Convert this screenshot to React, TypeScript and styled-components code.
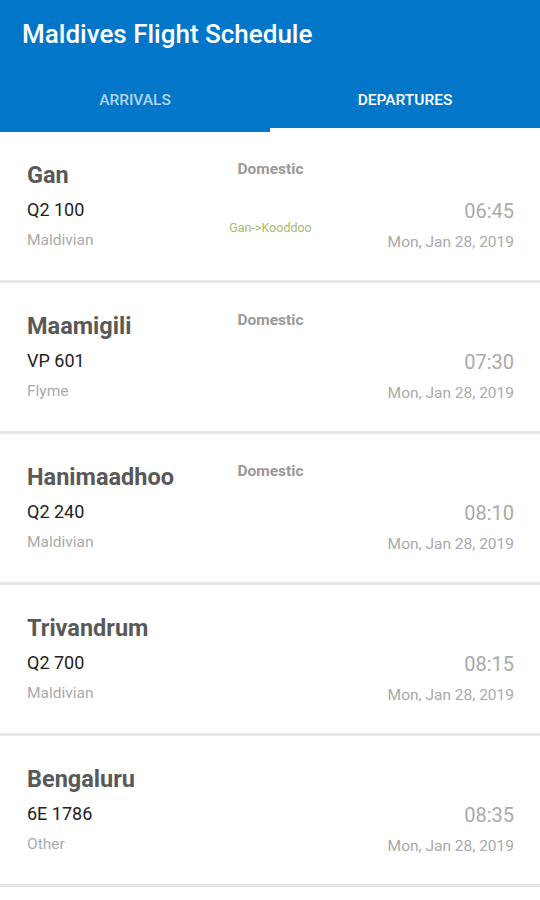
import styled, { createGlobalStyle } from 'styled-components';

const GlobalStyle = createGlobalStyle`
  body {
    margin: 0;
    background: #fff;
    font-family: Roboto, "Noto Sans", sans-serif;
  }
`;

const Page = styled.div`
  display: flex;
  flex-direction: column;
  width: 540px;
`;

const AppBar = styled.div`
  background: #0277c9;
  display: flex;
  flex-direction: column;
`;

const Title = styled.div`
  height: 67px;
  display: flex;
  align-items: center;
  padding-left: 22px;
  color: #fff;
  font-size: 26px;
  font-weight: 500;
`;

const Tabs = styled.div`
  display: grid;
  grid-template-columns: 1fr 1fr;
  height: 65px;
`;

const Tab = styled.div<{ $active?: boolean }>`
  display: flex;
  align-items: center;
  justify-content: center;
  font-size: 15.5px;
  font-weight: 500;
  color: ${(p) => (p.$active ? '#fff' : 'rgba(255,255,255,0.7)')};
  border-bottom: 4px solid ${(p) => (p.$active ? '#fff' : 'transparent')};
  padding-top: 4px;
`;

const Card = styled.div`
  display: grid;
  grid-template-columns: 1fr 1fr 1fr;
  height: 151px;
  box-sizing: border-box;
  padding: 29px 26px 0 27px;
  border-bottom: 3px solid #e6e6e6;
`;

const Col = styled.div<{ $align: 'flex-start' | 'center' | 'flex-end' }>`
  display: flex;
  flex-direction: column;
  align-items: ${(p) => p.$align};
`;

const City = styled.div`
  font-size: 23.5px;
  line-height: 28px;
  font-weight: 700;
  color: #595959;
`;

const FlightNo = styled.div`
  margin-top: 10px;
  font-size: 18px;
  line-height: 22px;
  color: #222;
`;

const Airline = styled.div`
  margin-top: 10px;
  font-size: 15.5px;
  line-height: 18px;
  color: #aaa;
`;

const Kind = styled.div`
  font-size: 15.5px;
  line-height: 18px;
  font-weight: 700;
  color: #999;
  margin-top: -1px;
`;

const Route = styled.div`
  margin-top: 43px;
  font-size: 12.5px;
  line-height: 14px;
  color: #a9ba6c;
`;

const Time = styled.div`
  margin-top: 38px;
  font-size: 20px;
  line-height: 24px;
  color: #aaa;
`;

const DateText = styled.div`
  margin-top: 10px;
  font-size: 15.5px;
  line-height: 18px;
  color: #aaa;
`;

type Flight = {
  city: string;
  no: string;
  airline: string;
  domestic?: boolean;
  route?: string;
  time: string;
};

const flights: Flight[] = [
  { city: 'Gan', no: 'Q2 100', airline: 'Maldivian', domestic: true, route: 'Gan->Kooddoo', time: '06:45' },
  { city: 'Maamigili', no: 'VP 601', airline: 'Flyme', domestic: true, time: '07:30' },
  { city: 'Hanimaadhoo', no: 'Q2 240', airline: 'Maldivian', domestic: true, time: '08:10' },
  { city: 'Trivandrum', no: 'Q2 700', airline: 'Maldivian', time: '08:15' },
  { city: 'Bengaluru', no: '6E 1786', airline: 'Other', time: '08:35' },
];

export default function App() {
  return (
    <Page>
      <GlobalStyle />
      <AppBar>
        <Title>Maldives Flight Schedule</Title>
        <Tabs>
          <Tab>ARRIVALS</Tab>
          <Tab $active>DEPARTURES</Tab>
        </Tabs>
      </AppBar>
      {flights.map((f) => (
        <Card key={f.no}>
          <Col $align="flex-start">
            <City>{f.city}</City>
            <FlightNo>{f.no}</FlightNo>
            <Airline>{f.airline}</Airline>
          </Col>
          <Col $align="center">
            {f.domestic && <Kind>Domestic</Kind>}
            {f.route && <Route>{f.route}</Route>}
          </Col>
          <Col $align="flex-end">
            <Time>{f.time}</Time>
            <DateText>Mon, Jan 28, 2019</DateText>
          </Col>
        </Card>
      ))}
    </Page>
  );
}
